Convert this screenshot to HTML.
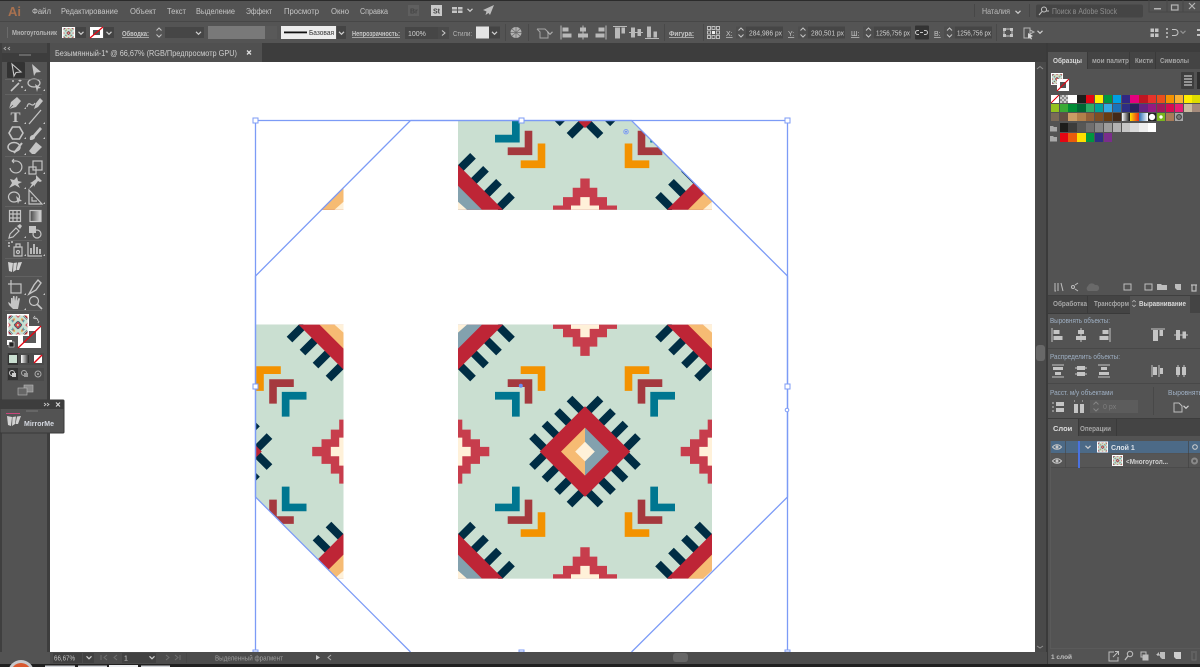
<!DOCTYPE html>
<html lang="ru"><head><meta charset="utf-8"><title>Illustrator</title>
<style>
html,body{margin:0;padding:0;background:#535353}
body{position:relative;width:1200px;height:667px;overflow:hidden;font-family:"Liberation Sans","Noto Sans CJK SC",sans-serif}
svg{position:absolute;left:0;top:0;display:block}
text{font-family:"Liberation Sans","Noto Sans CJK SC",sans-serif;font-size:8px;fill:#c6c6c6}
.s{font-size:7px}.b{font-weight:bold}.d{fill:#a8a8a8}
.u{text-decoration:underline}
.sw{position:absolute;left:1050.7px;display:flex;gap:.57px;width:160px}
.sw i{display:block;flex:none;width:8.3px;height:8.3px}
.ic{fill:none;stroke:#c4c4c4;stroke-width:1.2}
.if{fill:#c4c4c4}
</style></head><body>
<svg width="1200" height="667" viewBox="0 0 1200 667" xmlns="http://www.w3.org/2000/svg">
<defs>
<clipPath id="tc"><rect x="0" y="0" width="254" height="254.4"/></clipPath>
<clipPath id="oct"><path d="M410.5 120H631.5L787 275.5V497L631.5 652H410.5L255 497V275.5Z"/></clipPath>
<linearGradient id="gr"><stop offset="0" stop-color="#444"/><stop offset="1" stop-color="#ddd"/></linearGradient>
<linearGradient id="gr2"><stop offset="0" stop-color="#fff"/><stop offset="1" stop-color="#222"/></linearGradient>
<g id="q">
<path fill="#f39200" d="M-64.3-85.3H-39.7V-60.7H-47.3V-77.6H-64.3Z"/>
<path fill="#a5393e" d="M-77.3-72.3H-52.7V-48H-60.3V-64.6H-77.3Z"/>
<path fill="#007690" d="M-90-59.7H-65.3V-35H-73V-52H-90Z"/>
<g stroke="#002d44" stroke-width="8" fill="none">
<path d="M-53-15.5L-33 4.5M-40.500-28L-20.500-8M-28-40.500L-8-20.500M-15.500-53L4.500-33"/>
<path d="M-87.500-126.500L-73-112M-100.500-113.500L-86-99M-113.500-100.500L-99-86M-126.500-87.500L-112-73"/>
</g>
</g>
<g id="m">
<path fill="#c73d4c" d="M-32-127H32V-122.7H22V-114.3H12.3V-105H4.7V-95.7H-4.7V-105H-12.3V-114.3H-22V-122.7H-32Z"/>
<path fill="#fff1d9" d="M-14-127H14V-122.7H4.7V-114.3H-4.7V-122.7H-14Z"/>
</g>
<g id="tile" clip-path="url(#tc)">
<rect width="254" height="254.4" fill="#cadfd1"/>
<g transform="translate(127 127.2)">
<use href="#q"/><use href="#q" transform="scale(-1 1)"/><use href="#q" transform="scale(1 -1)"/><use href="#q" transform="scale(-1 -1)"/>
<path fill="#be2536" d="M-127-127H-82L-127-82ZM127-127H82L127-82ZM-127 127H-82L-127 82ZM127 127H82L127 82Z"/>
<path fill="#83a1ae" d="M-127-127H-103L-127-103ZM-127 127H-103L-127 103Z"/>
<path fill="#f6bb73" d="M127-127H103L127-103ZM127 127H103L127 103Z"/>
<path fill="#fff1d9" d="M-127-127H-118L-127-119ZM127-127H118L127-119ZM-127 127H-118L-127 119ZM127 127H118L127 119Z"/>
<use href="#m"/><use href="#m" transform="rotate(90)"/><use href="#m" transform="rotate(180)"/><use href="#m" transform="rotate(270)"/>
<path fill="#be2536" d="M-45.3 0L0-45.3L45.3 0L0 45.3Z"/>
<path fill="#f6bb73" d="M-24 0L0-24V24Z"/>
<path fill="#83a1ae" d="M24 0L0-24V24Z"/>
<path fill="#fff1d9" d="M-9.8 0L0-9.8L9.8 0L0 9.8Z"/>
</g>
</g>
<g id="alL"><path d="M-6-7V7" stroke="#c4c4c4" fill="none"/><rect x="-4.5" y="-5" width="6" height="4" fill="#c4c4c4"/><rect x="-4.5" y="1" width="9" height="4" fill="#c4c4c4"/></g>
<g id="alC"><path d="M0-7V7" stroke="#c4c4c4" fill="none"/><rect x="-3" y="-5" width="6" height="4" fill="#c4c4c4"/><rect x="-5" y="1" width="10" height="4" fill="#c4c4c4"/></g>
<g id="alR"><path d="M6-7V7" stroke="#c4c4c4" fill="none"/><rect x="-1.5" y="-5" width="6" height="4" fill="#c4c4c4"/><rect x="-4.5" y="1" width="9" height="4" fill="#c4c4c4"/></g>
<g id="alT"><path d="M-7-6H7" stroke="#c4c4c4" fill="none"/><rect x="-5" y="-5" width="5" height="11" fill="#c4c4c4"/><rect x="1.5" y="-5" width="3.5" height="6" fill="#c4c4c4"/></g>
<g id="alM"><path d="M-7 0H7" stroke="#c4c4c4" fill="none"/><rect x="-5" y="-5" width="4" height="10" fill="#c4c4c4"/><rect x="1.5" y="-3.5" width="3.5" height="7" fill="#c4c4c4"/></g>
<g id="alB"><path d="M-7 6H7" stroke="#c4c4c4" fill="none"/><rect x="-5" y="-6" width="4" height="11" fill="#c4c4c4"/><rect x="1.5" y="-1" width="3.5" height="6" fill="#c4c4c4"/></g>
<g id="spin"><path d="M-2.5-2L0-4.5L2.5-2M-2.5 2L0 4.5L2.5 2" fill="none" stroke="#c4c4c4" stroke-width="1"/></g>
<g id="chev"><path d="M-2.5-1.2L0 1.3L2.5-1.2" fill="none" stroke="#cfcfcf" stroke-width="1.2"/></g>
<g id="mm"><path d="M0 0L5 1L4 10L1 9ZM5.5 1L9 0.5L8 8L5 10ZM10 0.5L14 0L11 8L8.5 8Z" fill="#d2d2d2"/></g>
<g id="eye"><path d="M-4.5 0C-2-3 2-3 4.5 0C2 3-2 3-4.5 0Z" fill="none" stroke="#c8c8c8"/><circle r="1.5" fill="#c8c8c8"/></g>
</defs>

<!-- chrome backgrounds -->
<rect width="1200" height="667" fill="#535353"/>
<rect width="1200" height="1" fill="#2b2b2b"/>
<rect y="21" width="1200" height="1" fill="#474747"/>
<rect y="22" width="1200" height="21" fill="#545454"/>
<rect y="43" width="1200" height="19" fill="#3d3d3d"/>
<rect x="50" y="43" width="212" height="19" fill="#505050"/>
<rect x="0" y="43" width="47" height="10" fill="#484848"/>
<rect x="47" y="43" width="3" height="620" fill="#3d3d3d"/>
<rect x="0" y="43" width="2" height="620" fill="#3f3f3f"/>
<rect x="1035" y="62" width="12" height="590" fill="#494949"/>
<rect x="1046" y="43" width="2" height="620" fill="#3a3a3a"/>
<rect x="1048" y="43" width="152" height="9" fill="#3d3d3d"/>

<!-- canvas -->
<rect x="50" y="62" width="985" height="590" fill="#fff"/>
<g clip-path="url(#oct)">
<use href="#tile" x="458" y="324.4"/>
<use href="#tile" x="89.5" y="324.4"/>
<use href="#tile" x="458" y="-44.4"/>
<use href="#tile" x="89.5" y="-44.4"/>
</g>
<g fill="none" stroke="#7c9bf6" stroke-width="1.300">
<path d="M255.500 120.500H787.500V652M255.500 120.500V652"/>
<path d="M410.500 120.500H631.500L787.500 276V497L631.500 652M410.500 652L255.500 497V276L410.500 120.500"/>
<g fill="#fff" stroke-width="1">
<rect x="253" y="118" width="5" height="5"/><rect x="519" y="118" width="5" height="5"/><rect x="785" y="118" width="5" height="5"/>
<rect x="253" y="384" width="5" height="5"/><rect x="785" y="384" width="5" height="5"/>
<rect x="253" y="650" width="5" height="2"/><rect x="519" y="650" width="5" height="2"/><rect x="785" y="650" width="5" height="2"/>
<circle cx="787" cy="410" r="1.800"/>
</g>
<circle cx="626" cy="131.700" r="2.200" stroke-width="1"/>
</g>
<circle cx="626" cy="131.700" r="1" fill="#6a8cf5"/>
<circle cx="520.800" cy="385.700" r="2" fill="#6a8cf5"/>

<!-- menu bar -->
<text x="8" y="16" style="font-size:13px;fill:#a8714f;font-weight:bold">Ai</text>
<g style="font-size:8.500px">
<text x="32" y="14" textLength="19" lengthAdjust="spacingAndGlyphs">Файл</text>
<text x="61" y="14" textLength="57" lengthAdjust="spacingAndGlyphs">Редактирование</text>
<text x="130" y="14" textLength="26" lengthAdjust="spacingAndGlyphs">Объект</text>
<text x="167" y="14" textLength="19" lengthAdjust="spacingAndGlyphs">Текст</text>
<text x="196" y="14" textLength="39" lengthAdjust="spacingAndGlyphs">Выделение</text>
<text x="246" y="14" textLength="26" lengthAdjust="spacingAndGlyphs">Эффект</text>
<text x="284" y="14" textLength="35" lengthAdjust="spacingAndGlyphs">Просмотр</text>
<text x="331" y="14" textLength="18" lengthAdjust="spacingAndGlyphs">Окно</text>
<text x="360" y="14" textLength="28" lengthAdjust="spacingAndGlyphs">Справка</text>
</g>
<rect x="408" y="5" width="11" height="11" fill="#5f5f5f"/><text x="410" y="13.500" class="s b" style="fill:#444">Br</text>
<rect x="431" y="5" width="11" height="11" fill="#c9c9c9"/><text x="433" y="13.500" class="s b" style="fill:#444">St</text>
<path d="M452 7h5v2.500h-5zM458 7h4.500v2.500h-4.500zM452 10.500h5v2.500h-5zM458 10.500h4.500v2.500h-4.500z" fill="#c4c4c4"/>
<use href="#chev" x="470" y="10"/>
<path d="M494 5L483 10L486.500 11.500L485.500 15L488.500 13L490 15Z" fill="#bdbdbd"/>
<rect x="974" y="4" width="1" height="13" fill="#474747"/>
<text x="982" y="14" textLength="28" lengthAdjust="spacingAndGlyphs" style="fill:#bdbdbd;font-size:8.500px">Наталия</text>
<use href="#chev" x="1018" y="12"/>
<rect x="1029" y="4" width="1" height="13" fill="#474747"/>
<rect x="1036" y="4.500" width="107" height="13" rx="2" fill="#454545"/>
<circle cx="1044" cy="9.500" r="2.500" fill="none" stroke="#c4c4c4"/><path d="M1042 11.500L1039 15M1046 11h3" stroke="#c4c4c4" fill="none"/>
<text x="1052" y="14" textLength="65" lengthAdjust="spacingAndGlyphs" style="fill:#8d8d8d;font-size:8px">Поиск в Adobe Stock</text>
<path d="M1149 0V12H1200" fill="none" stroke="#474747"/>
<path d="M1167 0V12M1183 0V12" stroke="#474747"/>
<rect x="1154" y="8" width="7" height="1.500" fill="#b4b4b4"/>
<rect x="1171.500" y="5" width="6.500" height="5" fill="none" stroke="#b4b4b4" stroke-width="1.200"/>
<path d="M1189 3L1195 9M1195 3L1189 9" stroke="#b4b4b4" stroke-width="1.200"/>

<!-- control bar -->
<rect x="7" y="27" width="1" height="11" fill="#6a6a6a"/>
<text x="12" y="35" class="s b" textLength="45" lengthAdjust="spacingAndGlyphs" style="fill:#b5b5b5">Многоугольник</text>
<rect x="62" y="27" width="13" height="11" fill="#fff"/>
<use href="#tile" transform="translate(63.500 28) scale(.04)"/>
<rect x="76" y="27" width="10" height="11" fill="#444"/><use href="#chev" x="81" y="33"/>
<rect x="90" y="27" width="13" height="11" fill="#fff"/><rect x="93" y="30" width="7" height="5" fill="#555"/><path d="M90 38L103 27" stroke="#e30613" stroke-width="1.300"/>
<rect x="104" y="27" width="10" height="11" fill="#444"/><use href="#chev" x="109" y="33"/>
<text x="122" y="36" class="s b u" textLength="27" lengthAdjust="spacingAndGlyphs">Обводка:</text>
<use href="#spin" x="159" y="32.500"/>
<rect x="165" y="27" width="28" height="11" fill="#464646"/>
<rect x="193" y="27" width="11" height="11" fill="#464646"/><use href="#chev" x="198.500" y="33"/>
<rect x="208" y="26" width="57" height="13" fill="#797979"/>
<rect x="265" y="26" width="12" height="13" fill="#595959"/>
<rect x="281" y="26" width="55" height="13" fill="#ededed"/>
<rect x="284" y="31.500" width="23" height="1.800" fill="#111"/>
<text x="309" y="35" class="s" textLength="25" lengthAdjust="spacingAndGlyphs" style="fill:#333">Базовая</text>
<rect x="337" y="26" width="9" height="13" fill="#444"/><use href="#chev" x="341.500" y="33"/>
<text x="352" y="36" class="s b u" textLength="48" lengthAdjust="spacingAndGlyphs">Непрозрачность:</text>
<rect x="405" y="27" width="33" height="12" fill="#464646"/>
<text x="408" y="36" class="s" style="fill:#d0d0d0">100%</text>
<rect x="438" y="27" width="11" height="12" fill="#4a4a4a"/><path d="M442 30.500L445 33L442 35.500" fill="none" stroke="#ccc"/>
<text x="453" y="36" class="s" textLength="19" lengthAdjust="spacingAndGlyphs" style="fill:#b5b5b5">Стили:</text>
<rect x="476" y="26.500" width="13" height="12" fill="#e4e4e4"/>
<rect x="489" y="26.500" width="11" height="12" fill="#444"/><use href="#chev" x="494.500" y="33"/>
<rect x="505" y="24" width="1" height="17" fill="#494949"/>
<circle cx="516" cy="32.500" r="5.500" fill="#b2b2b2"/><path d="M510.500 32.500h11M516 27v11M512 29l8 7M520 29l-8 7" stroke="#6a6a6a" stroke-width=".7"/>
<rect x="528" y="24" width="1" height="17" fill="#494949"/>
<path d="M537 29h8l3 3v6h-8v-6l-3-3" fill="none" stroke="#a4a4a4"/>
<use href="#chev" x="550" y="33" opacity=".7"/>
<use href="#alL" x="567" y="32.500" opacity=".9"/><use href="#alC" x="583" y="32.500" opacity=".9"/><use href="#alR" x="600" y="32.500" opacity=".9"/>
<use href="#alT" x="620" y="32.500" opacity=".9"/><use href="#alM" x="636" y="32.500" opacity=".9"/><use href="#alB" x="652" y="32.500" opacity=".9"/>
<rect x="664" y="24" width="1" height="17" fill="#494949"/>
<text x="669" y="36" class="s b u" textLength="25" lengthAdjust="spacingAndGlyphs">Фигура:</text>
<rect x="703" y="24" width="1" height="17" fill="#494949"/>
<g fill="none" stroke="#c8c8c8" stroke-width=".9"><rect x="707.500" y="26.500" width="3" height="3"/><rect x="712" y="26.500" width="3" height="3"/><rect x="716.500" y="26.500" width="3" height="3"/><rect x="707.500" y="31" width="3" height="3"/><rect x="716.500" y="31" width="3" height="3"/><rect x="707.500" y="35.500" width="3" height="3"/><rect x="712" y="35.500" width="3" height="3"/><rect x="716.500" y="35.500" width="3" height="3"/></g><rect x="712" y="31" width="3" height="3" fill="#eee"/>
<text x="726" y="36" class="s u">X:</text>
<rect x="736" y="26.500" width="47" height="12" fill="#464646"/><rect x="736" y="26.500" width="10" height="12" fill="#4e4e4e"/><use href="#spin" x="741" y="32.500"/>
<text x="749" y="35.500" class="s" textLength="33" lengthAdjust="spacingAndGlyphs" style="fill:#d0d0d0">284,986 px</text>
<text x="788" y="36" class="s u">Y:</text>
<rect x="798" y="26.500" width="47" height="12" fill="#464646"/><rect x="798" y="26.500" width="10" height="12" fill="#4e4e4e"/><use href="#spin" x="803" y="32.500"/>
<text x="811" y="35.500" class="s" textLength="33" lengthAdjust="spacingAndGlyphs" style="fill:#d0d0d0">280,501 px</text>
<text x="851" y="36" class="s u">Ш:</text>
<rect x="863" y="26.500" width="48" height="12" fill="#464646"/><rect x="863" y="26.500" width="11" height="12" fill="#4e4e4e"/><use href="#spin" x="868.500" y="32.500"/>
<text x="876" y="35.500" class="s" textLength="34" lengthAdjust="spacingAndGlyphs" style="fill:#d0d0d0">1256,756 px</text>
<rect x="915" y="25.500" width="14" height="14" rx="1" fill="#333"/><path d="M919 30.500h-1.500a2 2 0 000 4h1.500M924 30.500h1.500a2 2 0 010 4h-1.500M920 32.500h3" fill="none" stroke="#c8c8c8"/>
<text x="934" y="36" class="s u">В:</text>
<rect x="944" y="26.500" width="48" height="12" fill="#464646"/><rect x="944" y="26.500" width="11" height="12" fill="#4e4e4e"/><use href="#spin" x="949.500" y="32.500"/>
<text x="957" y="35.500" class="s" textLength="34" lengthAdjust="spacingAndGlyphs" style="fill:#d0d0d0">1256,756 px</text>
<rect x="996" y="24" width="1" height="17" fill="#494949"/>
<path d="M1005 29h6M1005 36h6M1004 30v5M1012 30v5" stroke="#c4c4c4" fill="none"/><path d="M1003 28h3v3h-3zM1010 28h3v3h-3zM1003 34h3v3h-3zM1010 34h3v3h-3z" fill="#c4c4c4"/>
<path d="M1024 28h6v10h-6zM1030 30l4 2-4 2" fill="none" stroke="#b4b4b4"/><path d="M1028 33l5 3-2 1 1 2-1 .5-1-2-2 1z" fill="#d8d8d8"/>
<use href="#chev" x="1040" y="32"/>
<path d="M1151 29h2.500v2.500h-2.500zM1155.500 29h2.500v2.500h-2.500zM1151 34h2.500v2.500h-2.500zM1155.500 34h2.500v2.500h-2.500z" fill="#c4c4c4" stroke="#c4c4c4"/>
<path d="M1167 28v2M1167 32v2M1167 36v2" stroke="#c4c4c4" stroke-width="1.500"/><path d="M1172 29.500h3a3 3 0 010 6h-3" fill="none" stroke="#c4c4c4"/>
<use href="#chev" x="1183" y="32" opacity=".5"/><rect x="1197" y="29" width="3" height="2" fill="#c4c4c4"/><rect x="1197" y="34" width="3" height="2" fill="#c4c4c4"/>

<!-- tab -->
<text x="55" y="56" textLength="182" lengthAdjust="spacingAndGlyphs" style="fill:#cfcfcf;font-size:8.500px">Безымянный-1* @ 66,67% (RGB/Предпросмотр GPU)</text>
<path d="M247 50.500L251 54.500M251 50.500L247 54.500" stroke="#ddd" stroke-width="1.300"/>
<path d="M6 47l-2 1.500 2 1.500M10 47l-2 1.500 2 1.500" stroke="#b0b0b0" fill="none" stroke-width=".8"/>
<rect x="19" y="54" width="12" height="2" fill="#666"/>

<!-- tools -->
<rect x="7" y="62" width="18" height="16" rx="1" fill="#333"/>
<path d="M12 64L21 72L16 72.500L14 76Z" fill="none" stroke="#c8c8c8" stroke-width="1.100"/>
<path d="M32 64L41 72L36 72.500L34 76Z" fill="#c4c4c4"/>
<g class="ic">
<g transform="translate(16 85)"><path d="M-5 6L3-2" stroke-width="1.600"/><path d="M4-6v3M2.500-4.500h3M-3-5v2M-4-4h2M6 1v2M5 2h2" stroke-width=".9"/></g>
<g transform="translate(35 85)"><ellipse cx="-1" cy="-2" rx="6" ry="4"/><path d="M0-1L6 3L3 3.500L2 7Z" fill="#c4c4c4" stroke="none"/></g>
<g transform="translate(15 103)"><path d="M-6 6L-4-1L2-6L6-2L1 4Z" fill="#c4c4c4" stroke="none"/><path d="M-6 6L-2 2" stroke="#535353" stroke-width=".8"/></g>
<g transform="translate(35 103)"><path d="M-8 4C-6-4-3 6 0 0"/><path d="M-1 6L1 0L5-5L8-2L3 4Z" fill="#c4c4c4" stroke="none"/></g>
<g transform="translate(35 117)"><path d="M-6 7L6-7" stroke-width="1.300"/></g>
<g transform="translate(16 133)"><path d="M-3.500-6H3.500L7 0L3.500 6H-3.500L-7 0Z" stroke-width="1.600"/></g>
<g transform="translate(35 133)"><path d="M-5 7C-6 3-3 2-2 2L5-6L7-4L0 4C0 6-2 7-5 7Z" fill="#c4c4c4" stroke="none"/></g>
<g transform="translate(15 148)"><ellipse cx="-1" cy="-1" rx="6" ry="4.500" stroke-width="1.500"/><path d="M-1 5L7-5" stroke-width="2"/></g>
<g transform="translate(35 148)"><path d="M-6 3L1-6L7-1L0 6H-3Z" fill="#c4c4c4" stroke="none"/></g>
<g transform="translate(16 167)"><path d="M-6 1A6 6 0 1 0 -1-6H-4M-4-6L-2-8M-4-6L-2-4"/></g>
<g transform="translate(35 167)"><rect x="-6" y="0" width="7" height="7"/><rect x="-2" y="-6" width="9" height="9"/></g>
<g transform="translate(15 182)"><path d="M-6 6L-3 1L-5-3L-1-2L2-5L3-1L7 0L3 2L5 6L0 3Z" fill="#c4c4c4" stroke="none"/></g>
<g transform="translate(35 182)"><path d="M1-7L7-1L5 0L3-1L0 3L0 5L-1 3L-6 7L-3 2L-5 1L-3 0L1-3Z" fill="#c4c4c4" stroke="none"/></g>
<g transform="translate(15 197)"><ellipse cx="-1" cy="0" rx="5.500" ry="5"/><path d="M1-1L7 4L4 4.500L3 7Z" fill="#c4c4c4" stroke="none"/></g>
<g transform="translate(35 197)"><path d="M-6-7V7H7ZM-3 0V4H2"/></g>
<g transform="translate(15 216)"><rect x="-5.500" y="-5.500" width="11" height="11"/><path d="M-2-5.500V5.500M2-5.500V5.500M-5.500-2H5.500M-5.500 2H5.500"/></g>
<rect x="30" y="210.500" width="11" height="11" fill="url(#gr)"/>
<g transform="translate(15 231)"><path d="M-6 7L-5 3L1-3L4 0L-2 6Z"/><path d="M2-5L5-7L7-5L5-2Z" fill="#c4c4c4" stroke="none"/></g>
<g transform="translate(35 231)"><rect x="-6" y="-5" width="7" height="7" fill="#c4c4c4" stroke="none"/><circle cx="2" cy="3" r="4"/></g>
<g transform="translate(15 249)"><rect x="-1" y="-2" width="8" height="9"/><circle cx="3" cy="3" r="1.500"/><path d="M1-5h4v3h-4z"/><path d="M-7-6h2M-7-3h2M-4-7h2" stroke-width="1.400"/></g>
<g transform="translate(35 249)"><path d="M-7-7V7H7"/><path d="M-4 5V-1M-1 5V-5M2 5V-2M5 5V0" stroke-width="1.800"/></g>
<g transform="translate(15 287)"><rect x="-4" y="-3" width="10" height="9"/><path d="M-7-3H-4M-4-7V-3"/></g>
<g transform="translate(35 287)"><path d="M-6 7L-1-2L3-7L6-4L1 3Z" stroke-width="1.400"/></g>
<g transform="translate(35 302)"><circle cx="-1" cy="-1" r="4.500"/><path d="M2.500 2.500L7 7" stroke-width="1.600"/></g>
</g>
<text x="15.500" y="122" text-anchor="middle" style="font-family:'Liberation Serif',serif;font-size:15px;font-weight:bold;fill:#c4c4c4">T</text>
<path class="if" transform="translate(15 302)" d="M-2 7L-6 3L-7 0L-5 1L-4 2V-4L-2.500-4V-1L-2-6L-.5-6L0-1L1-6L2.500-5.500L2-1L3.500-4L5-3.500L4 2L3 7Z"/>
<use href="#mm" x="8" y="262"/>
<path class="if" d="M23 74l2 0 0 2zM43 74l2 0 0 2z" opacity="0"/>
<g fill="#c4c4c4"><path d="M24 91h2v-2zM43 91h2v-2zM24 109h2v-2zM24 124h2v-2zM43 124h2v-2zM24 139h2v-2zM43 139h2v-2zM24 155h2v-2zM24 174h2v-2zM43 174h2v-2zM24 189h2v-2zM24 204h2v-2zM43 204h2v-2zM24 238h2v-2zM24 256h2v-2zM43 256h2v-2zM24 295h2v-2zM43 295h2v-2zM24 310h2v-2z"/></g>
<g fill="#6c6c6c"><rect x="5" y="79" width="37" height=".6"/><rect x="5" y="94" width="37" height=".6"/><rect x="5" y="156" width="37" height=".6"/><rect x="5" y="206" width="37" height=".6"/><rect x="5" y="240" width="37" height=".6"/><rect x="5" y="258" width="37" height=".6"/><rect x="5" y="276" width="37" height=".6"/><rect x="5" y="310" width="37" height=".6"/></g>

<!-- fill / stroke -->
<rect x="18" y="326" width="23" height="22" fill="#fff"/><rect x="23" y="331" width="13" height="12" fill="#5a5a5a"/><path d="M18 348L41 326" stroke="#e30613" stroke-width="1.300"/>
<rect x="7" y="314" width="22" height="22" fill="#fff"/>
<use href="#tile" transform="translate(8.500 315.500) scale(.075)"/>
<path d="M35 318a3 3 0 013 3M35 316l-1.500 2 2 1M38 323l1-2" fill="none" stroke="#c8c8c8" stroke-width=".9"/>
<rect x="7" y="340" width="5" height="5" fill="#fff"/><rect x="9" y="342" width="5" height="5" fill="#222" stroke="#ddd" stroke-width=".6"/>
<rect x="7" y="353" width="37" height="12" fill="#4b4b4b"/>
<rect x="8" y="353" width="10" height="12" fill="#333"/><rect x="9" y="355" width="8" height="8" fill="#cadfd1"/>
<rect x="21" y="355" width="8" height="8" fill="url(#gr2)"/>
<rect x="34" y="355" width="8" height="8" fill="#fff"/><path d="M34 363L42 355" stroke="#e30613" stroke-width="1.500"/>
<rect x="7" y="368" width="37" height="13" fill="#4b4b4b"/>
<rect x="8" y="368" width="10" height="12" fill="#333"/>
<circle cx="12" cy="373" r="2.500" fill="none" stroke="#ccc"/><rect x="12" y="373" width="4" height="4" fill="#ccc"/>
<circle cx="24" cy="373" r="2.500" fill="none" stroke="#aaa"/><rect x="24" y="373" width="4" height="4" fill="#999"/>
<circle cx="38" cy="374" r="3" fill="none" stroke="#aaa"/><circle cx="38" cy="374" r="1" fill="#aaa"/>
<rect x="24" y="385" width="9" height="7" fill="#8a8a8a" stroke="#bbb" stroke-width=".6"/><rect x="18" y="388" width="9" height="7" fill="#666" stroke="#bbb" stroke-width=".6"/>

<!-- mirrorme panel -->
<rect x="0" y="400" width="64" height="33" rx="1" fill="#535353" stroke="#3a3a3a"/>
<rect x="0" y="400" width="64" height="9" fill="#3d3d3d"/>
<path d="M44 403l2 1.500-2 1.500M47 403l2 1.500-2 1.500" stroke="#ccc" fill="none" stroke-width=".8"/>
<path d="M56 402.500L60 406.500M60 402.500L56 406.500" stroke="#ddd" stroke-width="1.100"/>
<rect x="26" y="410" width="12" height="2" fill="#666"/>
<rect x="6" y="413" width="14" height="1" fill="#c9457b"/>
<use href="#mm" x="7" y="416"/>
<text x="24" y="426" class="b" textLength="30" lengthAdjust="spacingAndGlyphs" style="font-size:7.500px;fill:#d4d8e0">MirrorMe</text>

<!-- scroll elements -->
<path d="M1037 69L1040 66.500L1043 69" fill="none" stroke="#8e8e8e"/>
<rect x="1036" y="345" width="9" height="16" rx="3" fill="#686868"/>
<path d="M1037 646l3 2 3-2" fill="none" stroke="#8e8e8e"/>

<!-- right panel top: swatches -->
<rect x="1048" y="52" width="152" height="232" fill="#535353"/>
<rect x="1087" y="52" width="113" height="17" fill="#444"/>
<g fill="#3a3a3a"><rect x="1087" y="52" width="1" height="17"/><rect x="1129" y="52" width="1" height="17"/><rect x="1155" y="52" width="1" height="17"/></g>
<text x="1053" y="63" class="b" textLength="29" lengthAdjust="spacingAndGlyphs" style="fill:#dadada;font-size:7.500px">Образцы</text>
<text x="1092" y="63" textLength="37" lengthAdjust="spacingAndGlyphs" class="b" style="fill:#a4a4a4;font-size:7px">мои палитр</text>
<text x="1135" y="63" textLength="18" lengthAdjust="spacingAndGlyphs" class="b" style="fill:#a4a4a4;font-size:7px">Кисти</text>
<text x="1160" y="63" textLength="29" lengthAdjust="spacingAndGlyphs" class="b" style="fill:#a4a4a4;font-size:7px">Символы</text>
<rect x="1051" y="73" width="12" height="12" fill="#fff"/><use href="#tile" transform="translate(1052 74) scale(.04)"/>
<rect x="1057" y="79" width="12" height="12" fill="#fff"/><rect x="1060" y="82" width="6" height="6" fill="#555"/><path d="M1057 91L1069 79" stroke="#e30613" stroke-width="1.200"/>
<rect x="1181" y="72" width="13" height="17" rx="1" fill="#3e3e3e"/><path d="M1184 76h8M1184 79h8M1184 82h8M1184 85h8" stroke="#c8c8c8" stroke-width="1.300"/>
<rect x="1197" y="72" width="3" height="17" fill="#2f2f2f"/>
<path d="M1050 128l0 3.500h7v-4.500h-3l-1-1h-3z M1050 138l0 3.500h7v-4.500h-3l-1-1h-3z" fill="#a8a8a8"/>
</svg>

<div class="sw" style="top:95px">
<i style="background:linear-gradient(to top left,#fff 44%,#e30613 44%,#e30613 56%,#fff 56%)"></i><i style="background:repeating-conic-gradient(#ccc 0 25%,#8c8c8c 0 50%) 0 0/4px 4px"></i><i style="background:#fff"></i><i style="background:#1d1d1b"></i><i style="background:#e30613"></i><i style="background:#ffed00"></i><i style="background:#009640"></i><i style="background:#009fe3"></i><i style="background:#312783"></i><i style="background:#e6007e"></i><i style="background:#be1622"></i><i style="background:#e6332a"></i><i style="background:#e94e1b"></i><i style="background:#f39200"></i><i style="background:#f9b233"></i><i style="background:#ffed00"></i><i style="background:#dedc00"></i>
</div>
<div class="sw" style="top:104px">
<i style="background:#95c11f"></i><i style="background:#3aaa35"></i><i style="background:#008d36"></i><i style="background:#006633"></i><i style="background:#2fac66"></i><i style="background:#00a19a"></i><i style="background:#36a9e1"></i><i style="background:#1d71b8"></i><i style="background:#2d2e83"></i><i style="background:#29235c"></i><i style="background:#662483"></i><i style="background:#951b81"></i><i style="background:#a3195b"></i><i style="background:#d60b52"></i><i style="background:#e71d73"></i><i style="background:#cbbba0"></i><i style="background:#a48a7b"></i>
</div>
<div class="sw" style="top:112.800px">
<i style="background:#7b6a58"></i><i style="background:#634e42"></i><i style="background:#c99c64"></i><i style="background:#b17f4a"></i><i style="background:#936037"></i><i style="background:#7e4e24"></i><i style="background:#683c11"></i><i style="background:#432918"></i><i style="background:linear-gradient(to right,#fff,#111)"></i><i style="background:linear-gradient(to right,#ffe000,#e8231b)"></i><i style="background:linear-gradient(to right,#2b6fb5,#fff)"></i><i style="background:radial-gradient(circle,#fff 50%,#222 60%)"></i><i style="background:radial-gradient(circle,#fff 25%,#7ab51d 35%)"></i><i style="background:#a97a57"></i><i style="background:radial-gradient(circle,#777 30%,#333 40%,#aaa 60%)"></i>
</div>
<div class="sw" style="top:123.400px;left:1059.600px">
<i style="background:#1d1d1b"></i><i style="background:#3c3c3b"></i><i style="background:#575756"></i><i style="background:#706f6f"></i><i style="background:#878787"></i><i style="background:#9d9d9c"></i><i style="background:#b2b2b2"></i><i style="background:#c6c6c6"></i><i style="background:#dadada"></i><i style="background:#ededed"></i><i style="background:#fff"></i>
</div>
<div class="sw" style="top:133.400px;left:1059.600px">
<i style="background:#e30613"></i><i style="background:#ea5b0c"></i><i style="background:#ffde00"></i><i style="background:#009640"></i><i style="background:#2d2e83"></i><i style="background:#7b2d8b"></i>
</div>

<svg width="1200" height="667" viewBox="0 0 1200 667" xmlns="http://www.w3.org/2000/svg" style="pointer-events:none">
<!-- swatch panel bottom icons -->
<g fill="none" stroke="#bdbdbd">
<path d="M1055 283v8h1M1058 283v8M1061 283l2 8"/>
<circle cx="1073" cy="287" r="1.500"/><path d="M1075 285l3-2M1075 289l3 2"/>
<path d="M1088 291a3 3 0 010-5 4 4 0 017-1 3 3 0 012 6z" fill="#696969" stroke="none"/>
<rect x="1124" y="284" width="7" height="6"/><rect x="1145" y="284" width="7" height="6"/>
<path d="M1157 284h4l1 1h5v5h-10z" fill="#bdbdbd" stroke="none"/>
<path d="M1175 284h6v6h-4l-2-2z" fill="#bdbdbd" stroke="none"/>
<path d="M1191 285h6M1192 285v6h4v-6" stroke-width="1.200"/>
</g>
<!-- align panel -->
<rect x="1048" y="295" width="152" height="1" fill="#3f3f3f"/>
<rect x="1048" y="296" width="82" height="17" fill="#444"/>
<rect x="1190" y="296" width="10" height="17" fill="#444"/>
<rect x="1048" y="313" width="82" height="1" fill="#3a3a3a"/>
<rect x="1087" y="296" width="1" height="17" fill="#3a3a3a"/>
<text x="1053" y="306" class="b" textLength="34" lengthAdjust="spacingAndGlyphs" style="fill:#a6a6a6;font-size:7px">Обработка</text>
<text x="1094" y="306" class="b" textLength="35" lengthAdjust="spacingAndGlyphs" style="fill:#a6a6a6;font-size:7px">Трансформ</text>
<use href="#spin" transform="translate(1134 303.500) scale(.7)"/>
<text x="1139" y="306" class="b" textLength="47" lengthAdjust="spacingAndGlyphs" style="fill:#dadada;font-size:7px">Выравнивание</text>
<text x="1050" y="323" textLength="60" lengthAdjust="spacingAndGlyphs" style="fill:#9fb0c4;font-size:7.500px">Выровнять объекты:</text>
<use href="#alL" x="1058" y="335"/><use href="#alC" x="1081" y="335"/><use href="#alR" x="1104" y="335"/><use href="#alT" x="1158" y="335"/><use href="#alM" x="1181" y="335"/>
<rect x="1048" y="348" width="152" height="1" fill="#484848"/>
<text x="1050" y="359" textLength="70" lengthAdjust="spacingAndGlyphs" style="fill:#9fb0c4;font-size:7.500px">Распределить объекты:</text>
<g transform="translate(1058 371)"><path d="M-6-6H6M-6 6H6" stroke="#c4c4c4"/><rect x="-5" y="-4" width="10" height="3" fill="#c4c4c4"/><rect x="-3" y="1" width="6" height="3" fill="#c4c4c4"/></g>
<g transform="translate(1081 371)"><path d="M-6-3H6M-6 3H6" stroke="#c4c4c4"/><rect x="-4" y="-5" width="8" height="4" fill="#c4c4c4"/><rect x="-4" y="1" width="8" height="4" fill="#c4c4c4"/></g>
<g transform="translate(1104 371)"><path d="M-6-6H6M-6 6H6" stroke="#c4c4c4"/><rect x="-3" y="-4" width="6" height="3" fill="#c4c4c4"/><rect x="-5" y="1" width="10" height="3" fill="#c4c4c4"/></g>
<g transform="translate(1158 371)"><path d="M-6-6V6M1-6V6" stroke="#c4c4c4"/><rect x="-5" y="-4" width="4" height="8" fill="#c4c4c4"/><rect x="2" y="-3" width="3" height="6" fill="#c4c4c4"/></g>
<g transform="translate(1181 371)"><path d="M-3-6V6M3-6V6" stroke="#c4c4c4"/><rect x="-5" y="-4" width="4" height="8" fill="#c4c4c4"/><rect x="1" y="-4" width="4" height="8" fill="#c4c4c4"/></g>
<rect x="1048" y="383" width="152" height="1" fill="#484848"/>
<text x="1050" y="395" textLength="63" lengthAdjust="spacingAndGlyphs" style="fill:#9fb0c4;font-size:7.500px">Расст. м/у объектами</text>
<text x="1168" y="395" textLength="34" lengthAdjust="spacingAndGlyphs" style="fill:#9fb0c4;font-size:7.500px">Выровнять</text>
<rect x="1153" y="387" width="1" height="28" fill="#484848"/>
<g fill="#c4c4c4"><path d="M1053 402v2M1053 406v2M1053 410v2" stroke="#c4c4c4"/><rect x="1056" y="402" width="8" height="4"/><rect x="1056" y="408" width="8" height="4"/></g>
<g fill="#c4c4c4"><path d="M1074 401h1M1082 401h1" stroke="#c4c4c4"/><rect x="1074" y="404" width="4" height="9"/><rect x="1080" y="404" width="4" height="9"/></g>
<rect x="1090" y="400" width="48" height="13" fill="#5c5c5c"/>
<use href="#spin" x="1096" y="406.500" opacity=".4"/>
<text x="1103" y="409" class="s" style="fill:#7e7e7e">0 px</text>
<path d="M1174 403h5l3 3v6h-8z" fill="none" stroke="#bdbdbd"/><use href="#chev" x="1186" y="407"/>
<!-- layers -->
<rect x="1048" y="418" width="152" height="1" fill="#3d3d3d"/>
<rect x="1048" y="419" width="152" height="17" fill="#444"/>
<rect x="1048" y="419" width="30" height="17" fill="#535353"/>
<rect x="1078" y="419" width="1" height="17" fill="#3a3a3a"/><rect x="1116" y="419" width="1" height="17" fill="#3a3a3a"/>
<text x="1053" y="431" class="b" style="fill:#dedede;font-size:7.500px">Слои</text>
<text x="1080" y="431" class="b" textLength="31" lengthAdjust="spacingAndGlyphs" style="fill:#a6a6a6;font-size:7px">Операции</text>
<rect x="1050" y="441" width="150" height="12" fill="#4c6a87"/>
<rect x="1050" y="454" width="150" height="13" fill="#565656"/>
<rect x="1050" y="467" width="150" height="1" fill="#4b4b4b"/>
<rect x="1050" y="441" width=".8" height="208" fill="#5c5c5c"/>
<rect x="1065" y="441" width=".6" height="27" fill="#454545"/>
<rect x="1078" y="441" width="2" height="27" fill="#4a72e0"/>
<use href="#eye" x="1057" y="447"/><use href="#eye" x="1057" y="461"/>
<use href="#chev" x="1088" y="447"/>
<rect x="1097" y="441.500" width="11" height="11" fill="#fff"/><use href="#tile" transform="translate(1098 442.500) scale(.036)"/>
<text x="1111" y="450" class="b" style="fill:#dde3ea;font-size:7px">Слой 1</text>
<rect x="1188" y="441" width=".6" height="27" fill="#3f3f3f"/>
<circle cx="1195" cy="447" r="2.300" fill="none" stroke="#d0d0d0"/>
<rect x="1112" y="455" width="11" height="11" fill="#fff"/><use href="#tile" transform="translate(1113 456) scale(.036)"/>
<text x="1126" y="464" class="b" textLength="42" lengthAdjust="spacingAndGlyphs" style="fill:#d0d0d0;font-size:7px">&lt;Многоугол...</text>
<circle cx="1194.500" cy="461" r="3.500" fill="#8a8a8a"/><circle cx="1194.500" cy="461" r="1.500" fill="#555"/>
<rect x="1050" y="648" width="150" height=".8" fill="#5c5c5c"/>
<text x="1051" y="659" class="b" style="fill:#c0c0c0;font-size:6.500px">1 слой</text>
<g fill="none" stroke="#bdbdbd">
<path d="M1114 652h-5v9h9v-4M1113 657l5-5M1115 651.500h3.500v3.500"/>
<circle cx="1130" cy="654" r="2.700"/><path d="M1128 656l-3 4" stroke-width="1.300"/>
<rect x="1141" y="652" width="5" height="5"/><rect x="1143" y="655" width="5" height="5" fill="#bdbdbd"/>
<path d="M1157 655h3" stroke-width="1.300"/>
<path d="M1159 652l-3 3 3 0z" fill="#bdbdbd" stroke="none"/>
<path d="M1160 652h5v7h-3l-2-2z" fill="#bdbdbd" stroke="none"/>
<path d="M1174 652h7v7h-5l-2-2z" fill="#cdcdcd" stroke="none"/>
<path d="M1191 652h6M1192 653v7h4v-7" stroke="#6c6c6c"/>
</g>
<!-- status bar -->
<rect x="50" y="652" width="997" height="12" fill="#4c4c4c"/>
<rect x="0" y="652" width="50" height="12" fill="#535353"/>
<rect x="1047" y="652" width="1" height="12" fill="#3a3a3a"/>
<rect x="53" y="653" width="29" height="10" fill="#414141"/>
<text x="54" y="660.500" class="s" textLength="21" lengthAdjust="spacingAndGlyphs" style="fill:#c4c4c4">66,67%</text>
<rect x="83" y="653" width="11" height="10" fill="#414141"/><use href="#chev" x="89" y="657.500"/>
<path d="M101 655v5M107 655l-3 2.500 3 2.500M117 655l-3 2.500 3 2.500" fill="none" stroke="#6f6f6f"/>
<rect x="122" y="653" width="34" height="10" fill="#414141"/>
<text x="124" y="660.500" class="s" style="fill:#d0d0d0">1</text>
<use href="#chev" x="152" y="657.500"/>
<path d="M166 655l3 2.500-3 2.500M175 655l3 2.500-3 2.500M180 655v5" fill="none" stroke="#6f6f6f"/>
<rect x="186" y="653" width=".8" height="10" fill="#444"/>
<text x="215" y="660.500" class="s" textLength="68" lengthAdjust="spacingAndGlyphs" style="fill:#9e9e9e">Выделенный фрагмент</text>
<path d="M316 655l4 2.500-4 2.500z" fill="#c8c8c8"/>
<path d="M331 655l-3 2.500 3 2.500" fill="none" stroke="#aaa"/>
<rect x="673" y="653" width="15" height="9" rx="3" fill="#666"/>
<!-- taskbar sliver -->
<rect y="664" width="1200" height="3" fill="#202020"/>
<circle cx="21" cy="673" r="13" fill="#c6c8cc"/><circle cx="21" cy="673" r="10" fill="#d9582e"/>
<g fill="#cfd2d6"><rect x="45" y="665.500" width="30" height="2"/><rect x="78" y="665.500" width="29" height="2"/><rect x="109" y="665" width="29" height="2" fill="#eceef0"/><rect x="141" y="665.500" width="29" height="2"/></g>
</svg>
</body></html>
